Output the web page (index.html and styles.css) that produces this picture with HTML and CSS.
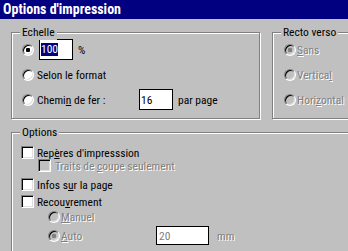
FILE: index.html
```html
<!DOCTYPE html>
<html lang="fr">
<head>
<meta charset="utf-8">
<title>Options d'impression</title>
<link rel="stylesheet" href="styles.css">
</head>
<body>
<div class="titlebar">Options d'impression</div>
<div class="main">
  <div class="top-row">
    <div class="group echelle">
      <span class="group-label">Echelle</span>
      <div class="opt">
        <span class="radio checked"></span>
        <span class="edit edit-first"><span class="sel">100</span></span>
        <span class="unit">%</span>
      </div>
      <div class="opt">
        <span class="radio"></span>
        <span class="lbl">Selon le format</span>
      </div>
      <div class="opt">
        <span class="radio"></span>
        <span class="lbl lbl-chemin">Chemi<u>n</u> de fer :</span>
        <span class="edit">16</span>
        <span class="unit">par page</span>
      </div>
    </div>
    <div class="group recto">
      <span class="group-label">Recto verso</span>
      <div class="opt">
        <span class="radio dis-radio checked"></span>
        <span class="lbl-r dis"><u>S</u>ans</span>
      </div>
      <div class="opt">
        <span class="radio dis-radio"></span>
        <span class="lbl-r dis">Vertica<u>l</u></span>
      </div>
      <div class="opt">
        <span class="radio dis-radio"></span>
        <span class="lbl-r dis">Hori<u>z</u>ontal</span>
      </div>
    </div>
  </div>
  <div class="group options">
    <span class="group-label">Options</span>
    <div class="crow">
      <span class="check"></span>
      <span class="lbl">Rep<u>è</u>res d'impresssion</span>
    </div>
    <div class="crow crow-sub">
      <span class="check dis-check"></span>
      <span class="lbl lbl-sub dis">Traits de <u>c</u>oupe seulement</span>
    </div>
    <div class="crow crow-infos">
      <span class="check"></span>
      <span class="lbl">Infos s<u>u</u>r la page</span>
    </div>
    <div class="crow crow-recouv">
      <span class="check"></span>
      <span class="lbl">Recou<u>v</u>rement</span>
    </div>
    <div class="crow rrow-manuel">
      <span class="radio dis-radio"></span>
      <span class="lbl-r dis"><u>M</u>anuel</span>
    </div>
    <div class="crow rrow-auto">
      <span class="radio dis-radio checked"></span>
      <span class="lbl-r lbl-auto dis"><u>A</u>uto</span>
      <span class="edit edit-mm">20</span>
      <span class="unit-mm dis">mm</span>
    </div>
  </div>
</div>
</body>
</html>
```
FILE: styles.css
```css
html, body {
  margin: 0;
  padding: 0;
}
body {
  background: #c0c0c0;
  color: #000;
  font-family: "Roboto Condensed", "Liberation Sans", Arial, sans-serif;
  font-size: 11.5px;
  width: 348px;
  height: 251px;
  overflow: hidden;
}
.titlebar {
  height: 19px;
  line-height: 19px;
  background: #000080;
  color: #fff;
  font-weight: bold;
  font-size: 14px;
  padding-left: 3px;
  white-space: nowrap;
}
.main {
  padding: 13px 0 0 11px;
}
.top-row {
  display: flex;
  gap: 12px;
}
.group {
  position: relative;
  box-sizing: border-box;
  border: 1px solid #808080;
  box-shadow: 1px 1px 0 #fff, inset 1px 1px 0 #fff;
  flex: none;
}
.group-label {
  position: absolute;
  top: -8px;
  left: 8px;
  padding: 0 2px;
  line-height: 15px;
  background: #c0c0c0;
  white-space: nowrap;
}
.echelle {
  width: 249px;
  height: 87px;
  padding: 4px 0 0 10px;
}
.recto {
  width: 100px;
  height: 87px;
  padding: 4px 0 0 11px;
}
.options {
  margin-top: 13px;
  width: 400px;
  height: 200px;
  padding: 13px 0 0 9px;
}
.opt {
  display: flex;
  align-items: center;
  height: 25px;
  white-space: nowrap;
}
.radio {
  position: relative;
  flex: none;
  width: 12px;
  height: 12px;
  box-sizing: border-box;
  border-radius: 50%;
  border: 1px solid;
  border-color: #808080 #fff #fff #808080;
  box-shadow: inset 1px 1px 0 #000, inset -1px -1px 0 #dfdfdf;
  background: #fff;
}
.radio.checked::after {
  content: "";
  position: absolute;
  left: 3px;
  top: 3px;
  width: 4px;
  height: 4px;
  border-radius: 1px;
  background: #000;
}
.dis-radio {
  background: #c0c0c0;
}
.dis-radio.checked::after {
  background: #808080;
}
.check {
  flex: none;
  width: 13px;
  height: 13px;
  box-sizing: border-box;
  border: 1px solid;
  border-color: #808080 #fff #fff #808080;
  box-shadow: inset 1px 1px 0 #000, inset -1px -1px 0 #dfdfdf;
  background: #fff;
}
.dis-check {
  background: #c0c0c0;
}
.lbl {
  margin-left: 3px;
}
.lbl-r {
  margin-left: 1px;
}
.lbl-chemin {
  width: 102px;
  flex: none;
}
.unit {
  margin-left: 5px;
}
.edit {
  flex: none;
  display: flex;
  align-items: center;
  box-sizing: border-box;
  width: 34px;
  height: 21px;
  border: 1px solid #000;
  background: #fff;
  padding-left: 1px;
}
.edit-first {
  margin-left: 5px;
}
.sel {
  display: inline-block;
  background: #000080;
  color: #fff;
  line-height: 13px;
  margin-bottom: 1px;
}
.dis {
  color: #808080;
  text-shadow: 1px 1px 0 #fff;
}
.crow {
  display: flex;
  align-items: center;
  height: 13px;
  white-space: nowrap;
}
.crow-sub {
  padding-left: 17px;
}
.lbl-sub {
  margin-left: 4px;
}
.crow-infos {
  margin-top: 6px;
}
.crow-recouv {
  margin-top: 4px;
}
.rrow-manuel {
  margin-top: 3px;
  height: 12px;
  padding-left: 27px;
}
.rrow-auto {
  margin-top: 3px;
  height: 19px;
  padding-left: 27px;
}
.lbl-auto {
  width: 95px;
  flex: none;
}
.edit-mm {
  width: 53px;
  height: 19px;
  color: #808080;
  padding-left: 2px;
}
.unit-mm {
  margin-left: 8px;
}
```
